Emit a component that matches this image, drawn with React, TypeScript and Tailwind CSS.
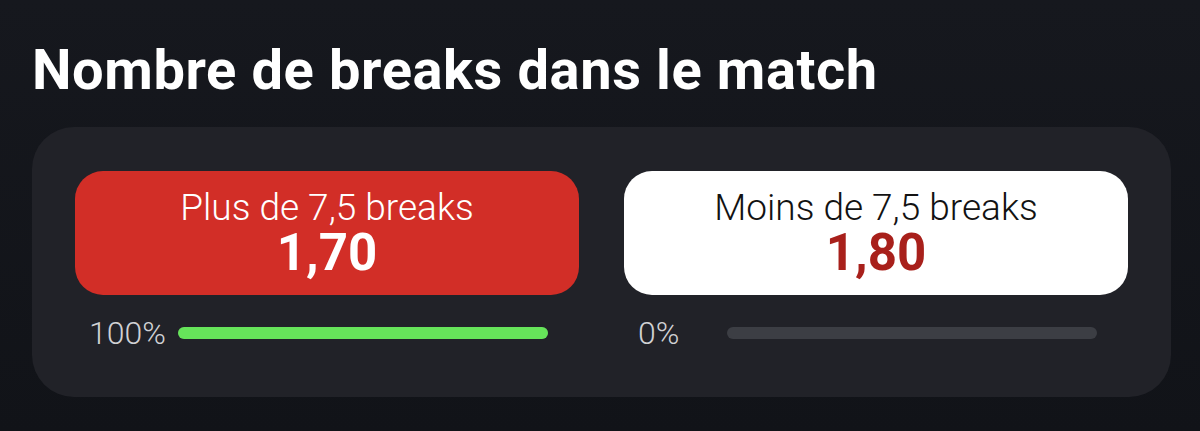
import React from "react";

interface Outcome {
  label: string;
  odds: string;
  share: number;
  selected: boolean;
}

const OUTCOMES: Outcome[] = [
  { label: "Plus de 7,5 breaks", odds: "1,70", share: 100, selected: true },
  { label: "Moins de 7,5 breaks", odds: "1,80", share: 0, selected: false },
];

function OutcomeColumn({ outcome }: { outcome: Outcome }) {
  return (
    <div className="flex flex-col">
      {/* Odds button */}
      <div
        className={`flex h-[124px] flex-col items-center justify-center gap-[4px] rounded-[28px] ${
          outcome.selected ? "bg-[#d22e27] text-white" : "bg-white text-[#121212]"
        }`}
      >
        <span className="text-[37px] font-light leading-[36px]">{outcome.label}</span>
        <span
          className={`text-[51px] font-bold leading-[46px] ${
            outcome.selected ? "text-white" : "text-[#a8201b]"
          }`}
        >
          {outcome.odds}
        </span>
      </div>

      {/* Share of bets */}
      <div className="mt-[22px] flex items-center pl-[14px] pr-[31px]">
        <span className="w-[89px] shrink-0 text-[32px] font-light leading-none text-[#d0d1d4]">
          {outcome.share}%
        </span>
        <div className="h-[12px] flex-1 rounded-full bg-[#3c3e44]">
          <div
            className="h-full rounded-full bg-[#66e45a]"
            style={{ width: `${outcome.share}%` }}
          />
        </div>
      </div>
    </div>
  );
}

export default function App() {
  return (
    <div className="h-[431px] w-[1200px] overflow-hidden bg-gradient-to-b from-[#16181e] to-[#111318] font-['Roboto',sans-serif]">
      <h1 className="pl-[32px] pt-[38px] text-[56px] font-bold leading-[64px] tracking-[0.6px] text-white">
        Nombre de breaks dans le match
      </h1>

      <div className="ml-[32px] mt-[25px] w-[1139px] rounded-[42px] bg-[#212228] px-[43px] pb-[48px] pt-[44px]">
        <div className="grid grid-cols-2 gap-[45px]">
          {OUTCOMES.map((o) => (
            <OutcomeColumn key={o.label} outcome={o} />
          ))}
        </div>
      </div>
    </div>
  );
}
